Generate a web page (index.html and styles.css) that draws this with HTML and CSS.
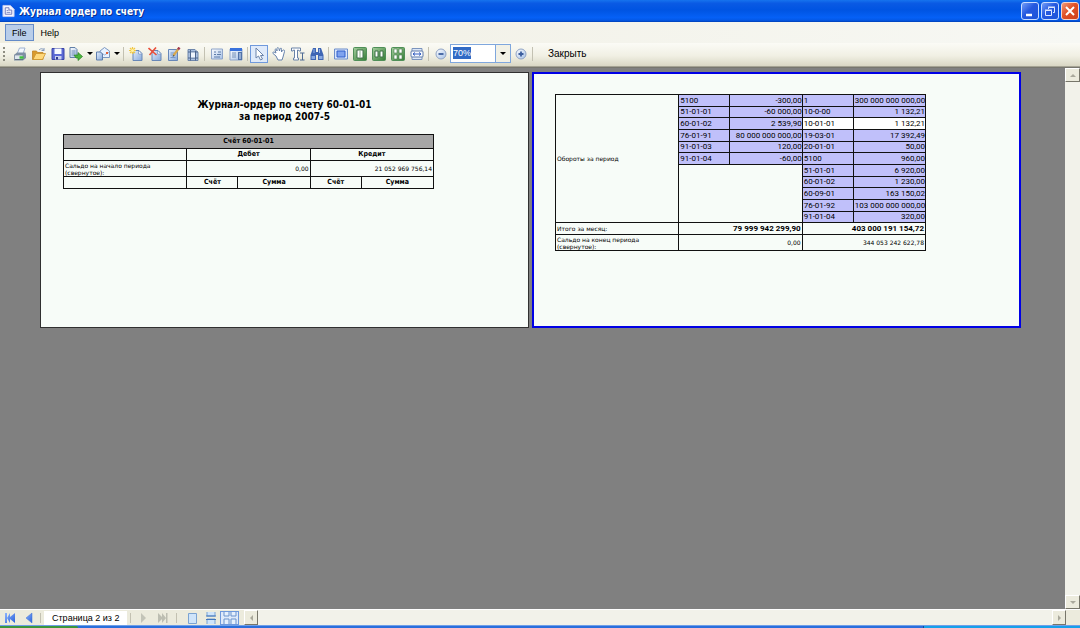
FILE: index.html
```html
<!DOCTYPE html>
<html lang="ru">
<head>
<meta charset="utf-8">
<title>Журнал ордер по счету</title>
<link rel="stylesheet" href="styles.css">
</head>
<body>
<svg class="defs" aria-hidden="true">
  <defs>
    <linearGradient id="paper" x2="1" y2="1"><stop stop-color="#fff"/><stop offset="1" stop-color="#a3bfe6"/></linearGradient>
    <linearGradient id="sheet" x2="1" y2="1"><stop stop-color="#e4eefb"/><stop offset="1" stop-color="#86a9dc"/></linearGradient>
    <linearGradient id="sky" x2="1" y2="1"><stop stop-color="#8cb4ff"/><stop offset="1" stop-color="#2c62d8"/></linearGradient>
    <linearGradient id="leaf" x2="1" y2="1"><stop stop-color="#a5cf9f"/><stop offset="1" stop-color="#347c34"/></linearGradient>
  </defs>
</svg>
<div class="window">
  <header class="titlebar">
    <svg class="app-icon" viewBox="0 0 14 14"><path d="M1 1h8l4 4v8H1z" fill="#f4f5ff" stroke="#c3c9ee"/><path d="M3.500 3.500v7h7V6h-3V3.500z" fill="none" stroke="#7078b8"/><path d="M5 6.500h2M5 8.500h4" stroke="#8088c0"/></svg>
    <h1>Журнал ордер по счету</h1>
    <button class="caption" aria-label="Свернуть"><svg viewBox="0 0 16 16"><path d="M4 12h6" stroke="#fff" stroke-width="2.500"/></svg></button>
    <button class="caption" aria-label="Восстановить"><svg viewBox="0 0 16 16" fill="none" stroke="#dce8ff"><path d="M6.500 6V4.500h6v5H11M6 4h7"/><path d="M3.500 7.500h6v5h-6zM3 7h7"/></svg></button>
    <button class="caption close" aria-label="Закрыть окно"><svg viewBox="0 0 16 16"><path d="M4 4l8 8M12 4l-8 8" stroke="#fff" stroke-width="2"/></svg></button>
  </header>
  <nav class="menu"><button class="active">File</button><button>Help</button></nav>
  <div class="toolbar">
    <span class="grip"></span>
    <button aria-label="Печать"><svg viewBox="0 0 14 14"><path d="M4 7l2.500-6H12l-2 6z" fill="#f4f8ff" stroke="#9fb2d0"/><path d="M1 8l3-2.500h8.500L13 8v3l-3 2.500H1z" fill="#7f8fa3"/><path d="M1.500 8h8.500v4.500H1.500z" fill="#dfe6ee" stroke="#7d8da0" stroke-width=".8"/><path d="M2 12.500h8" stroke="#5f7084"/><path d="M6.500 10.500h4" stroke="#3fc23f" stroke-width="2.500"/></svg></button>
    <button aria-label="Открыть"><svg viewBox="0 0 14 14"><path d="M.5 12.500V4h4l1 1.500H11v7z" fill="#d99a2c" stroke="#c08426" stroke-width=".8"/><path d="M1 12.500L4 6.500h9.500l-3 6z" fill="#ffd87a" stroke="#cc952f" stroke-width=".8"/><path d="M7 3c2-2 4-1.500 5 .5m0 0V1m0 2.500H9.500" fill="none" stroke="#8298bb"/></svg></button>
    <button aria-label="Сохранить"><svg viewBox="0 0 14 14"><path d="M1 1.500h12v11H1z" fill="#5b69d4" stroke="#3b45a8"/><path d="M3.500 1.500h7V7h-7z" fill="#f7faff"/><path d="M4 9h6.500v3.500H4z" fill="#c9d0ee"/><path d="M5 10h2v2.500H5z" fill="#2f3b8f"/></svg></button>
    <button class="split" aria-label="Экспорт"><svg viewBox="0 0 14 14"><path d="M1 .5h5l2 2v8H1z" fill="url(#paper)" stroke="#6280a8"/><path d="M2.500 4h4M2.500 6h4M2.500 8h3" stroke="#6f8cb6"/><path d="M5 8h4V5.500l4.500 4L9 13.500V11H7z" fill="#4cb63c" stroke="#278027" stroke-width=".7"/></svg><i class="arrow"></i></button>
    <button class="split" aria-label="Отправить"><svg viewBox="0 0 14 14"><path d="M4 4l4.500-3.500L13.500 4v6.500H4z" fill="#e9f2ff" stroke="#7b97c0"/><path d="M4 5l4.500 3 5-3" fill="none" stroke="#9ab0d2"/><path d="M.5 5h4l2 2v6h-6z" fill="url(#sheet)" stroke="#5f7eae"/><path d="M10 5h2v2h-2z" fill="#e0603c"/></svg><i class="arrow"></i></button>
    <span class="sep"></span>
    <button aria-label="Новая страница"><svg viewBox="0 0 14 14"><path d="M4 3.500h6l3 3v7H4z" fill="url(#sheet)" stroke="#6787b8"/><path d="M9.500 4v3h3" fill="#fff" stroke="#6787b8" stroke-width=".6"/><path d="M3.500 0v7M0 3.500h7M1 1l5 5M6 1L1 6" stroke="#f3c840" stroke-width="1.200"/><circle cx="3.500" cy="3.500" r="1.500" fill="#fff3a6"/></svg></button>
    <button aria-label="Удалить страницу"><svg viewBox="0 0 14 14"><path d="M4 3.500h6l3 3v7H4z" fill="url(#sheet)" stroke="#6787b8"/><path d="M9.500 4v3h3" fill="#fff" stroke="#6787b8" stroke-width=".6"/><path d="M.5 1l8 7M8 .5L1.500 8" stroke="#ea4f3a" stroke-width="1.600"/></svg></button>
    <button aria-label="Правка страницы"><svg viewBox="0 0 14 14"><path d="M1.500 2.500h9v11h-9z" fill="url(#sheet)" stroke="#6787b8"/><path d="M3.500 6h4M3.500 8h3M3.500 10.500h5" stroke="#7797c6"/><path d="M6.500 8.500l4.500-6" stroke="#d9a94d" stroke-width="2.200"/><path d="M11 2.500L12.500.5" stroke="#a33a4c" stroke-width="2.500"/><path d="M5.500 10l1-2 1 .8z" fill="#333"/></svg></button>
    <button aria-label="Параметры страницы"><svg viewBox="0 0 14 14"><path d="M2 2.500h7l3 3v8H2z" fill="#a9bfe0" stroke="#6f87ac"/><path d="M4.500 3v10.500M9.500 4v9.500M2 5h10M2 11h10" stroke="#4c648c"/><path d="M5 5.500h4v5H5z" fill="#eef4fd"/></svg></button>
    <span class="sep"></span>
    <button aria-label="Закладки"><svg viewBox="0 0 14 14"><path d="M1.500 2h11v10h-11z" fill="url(#paper)" stroke="#8fa5ca"/><path d="M4 5h2M8 5h3M4 7.500h2M7 7.500h4M4 10h6" stroke="#5f7da9"/></svg></button>
    <button aria-label="Параметры"><svg viewBox="0 0 14 14"><path d="M1 2h12v11H1z" fill="url(#paper)" stroke="#8fa5ca"/><path d="M1 1h12v3H1z" fill="#3972dc"/><path d="M3 6h4M3 8h4M3 10h4" stroke="#7791b8"/><path d="M9 5h4v8H9z" fill="#5072a8"/><path d="M10 7h2M10 9h2M10 11h2" stroke="#d7e5fa"/></svg></button>
    <span class="sep"></span>
    <button class="checked" aria-label="Выделение"><svg viewBox="0 0 14 14"><path d="M4 1v10l2.500-2L8.500 13l2-1-2-3.500h3z" fill="#fff" stroke="#6a83aa"/></svg></button>
    <button aria-label="Рука"><svg viewBox="0 0 14 14"><path d="M4 9L1 6.500C0 5 2 4.500 4 6L3 3c0-1.500 1.500-1 2 1L5 1.500c0-1.500 2-1 2 .5l.5 2 .5-2c.5-1.500 2-1 1.500.5L9.500 5l1-1.500C11.500 2.500 13 3 12.500 4.500L11 10l-1 3H6z" fill="#fff" stroke="#6682ab"/></svg></button>
    <button aria-label="Выделение текста"><svg viewBox="0 0 14 14"><path d="M.5 1h9v3H8L7.500 3H6.500v8h1v2h-5v-2h1V3h-1L2 4H.5z" fill="#fff" stroke="#6a83a8"/><path d="M9 6h4.500M11.500 6v7M9 13h4.500" stroke="#4f6b94"/></svg></button>
    <button aria-label="Поиск"><svg viewBox="0 0 14 14"><path d="M3 1h3v4h2V1h3l2.500 7v5H8V8H6v5H.5V8z" fill="#3f66b4"/><path d="M1.500 9H5v3H1.500zM9 9h3.500v3H9z" fill="#86a8e2"/><path d="M4 2v4M9.500 2v4" stroke="#94b4e9"/></svg></button>
    <span class="sep"></span>
    <button aria-label="Масштаб 100%"><svg viewBox="0 0 14 14"><path d="M.5 2h13v10H.5z" fill="#d8e5fc" stroke="#6d8ecb"/><path d="M3 4h8v6H3z" fill="#7fa3ef" stroke="#315fc9"/></svg></button>
    <button aria-label="Страница целиком"><svg viewBox="0 0 14 14"><rect x=".5" y=".5" width="13" height="13" rx="1" fill="url(#leaf)" stroke="#4f8f58"/><path d="M4 3h6v8H4z" fill="#fff" stroke="#3f7048"/><path d="M6 5h2M6 7h2M6 9h2" stroke="#8eb08f"/></svg></button>
    <button aria-label="Две страницы"><svg viewBox="0 0 14 14"><rect x=".5" y=".5" width="13" height="13" rx="1" fill="url(#leaf)" stroke="#4f8f58"/><path d="M3 4h3v6H3zM8 4h3v6H8z" fill="#fff" stroke="#3f7048"/></svg></button>
    <button aria-label="Несколько страниц"><svg viewBox="0 0 14 14"><rect x=".5" y=".5" width="13" height="13" rx="1" fill="url(#leaf)" stroke="#4f8f58"/><path d="M3 2h3v4H3zM8 2h3v4H8zM3 8h3v4H3zM8 8h3v4H8z" fill="#fff" stroke="#4a7e51" stroke-width=".6"/></svg></button>
    <button aria-label="По ширине"><svg viewBox="0 0 14 14"><path d="M2 1.500h10v3H2zM2 9.500h10v3H2z" fill="#dbe6f7" stroke="#7b94bd"/><rect x="1" y="4" width="12" height="6" rx="1" fill="#f6f9ff" stroke="#607ca9"/><path d="M3 7h8M5 5.500L3 7l2 1.500M9 5.500L11 7 9 8.500" fill="none" stroke="#335fc0"/></svg></button>
    <span class="sep"></span>
    <button aria-label="Уменьшить"><svg viewBox="0 0 14 14"><circle cx="7" cy="7" r="5" fill="url(#paper)" stroke="#8fa3c4"/><path d="M4.500 7h5" stroke="#3d5f9e" stroke-width="1.800"/></svg></button>
    <span class="combo"><select aria-label="Масштаб"><option>70%</option><option>100%</option></select></span>
    <button aria-label="Увеличить"><svg viewBox="0 0 14 14"><circle cx="7" cy="7" r="5" fill="url(#paper)" stroke="#8fa3c4"/><path d="M4.500 7h5M7 4.500v5" stroke="#3d5f9e" stroke-width="1.800"/></svg></button>
    <span class="sep"></span>
    <button class="text">Закрыть</button>
  </div>
  <main class="viewer">
    <div class="pages">
      <section class="page">
        <h2>Журнал-ордер по счету 60-01-01<br>за период 2007-5</h2>
        <table class="report">
          <colgroup><col class="c-name"><col class="c-acc"><col class="c-sum"><col class="c-acc"><col class="c-sum"></colgroup>
          <tbody>
          <tr class="band"><th colspan="5">Счёт 60-01-01</th></tr>
          <tr><td></td><th colspan="2">Дебет</th><th colspan="2">Кредит</th></tr>
          <tr class="tall"><td class="small">Сальдо на начало периода (свернутое):</td><td colspan="2" class="small num">0,00</td><td colspan="2" class="small num">21 052 969 756,14</td></tr>
          <tr><td></td><th>Счёт</th><th>Сумма</th><th>Счёт</th><th>Сумма</th></tr>
          </tbody>
        </table>
      </section>
      <section class="page current">
        <table class="report">
          <colgroup><col class="c-name"><col class="c-acc"><col class="c-sum"><col class="c-acc"><col class="c-sum"></colgroup>
          <tbody class="turnover">
          <tr><td rowspan="11" class="small">Обороты за период</td><td class="hl">5100</td><td class="hl num">-300,00</td><td class="hl">1</td><td class="hl num">300 000 000 000,00</td></tr>
          <tr><td class="hl">51-01-01</td><td class="hl num">-60 000,00</td><td class="hl">10-0-00</td><td class="hl num">1 132,21</td></tr>
          <tr><td class="hl">60-01-02</td><td class="hl num">2 539,90</td><td class="white">10-01-01</td><td class="white num">1 132,21</td></tr>
          <tr><td class="hl">76-01-91</td><td class="hl num">80 000 000 000,00</td><td class="hl">19-03-01</td><td class="hl num">17 392,49</td></tr>
          <tr><td class="hl">91-01-03</td><td class="hl num">120,00</td><td class="hl">20-01-01</td><td class="hl num">50,00</td></tr>
          <tr><td class="hl">91-01-04</td><td class="hl num">-60,00</td><td class="hl">5100</td><td class="hl num">960,00</td></tr>
          <tr><td colspan="2" rowspan="5"></td><td class="hl">51-01-01</td><td class="hl num">6 920,00</td></tr>
          <tr><td class="hl">60-01-02</td><td class="hl num">1 230,00</td></tr>
          <tr><td class="hl">60-09-01</td><td class="hl num">163 150,02</td></tr>
          <tr><td class="hl">76-01-92</td><td class="hl num">103 000 000 000,00</td></tr>
          <tr><td class="hl">91-01-04</td><td class="hl num">320,00</td></tr>
          </tbody>
          <tbody>
          <tr class="total"><td class="small">Итого за месяц:</td><td colspan="2" class="num">79 999 942 299,90</td><td colspan="2" class="num">403 000 191 154,72</td></tr>
          <tr class="tall"><td class="small">Сальдо на конец периода (свернутое):</td><td colspan="2" class="small num">0,00</td><td colspan="2" class="small num">344 053 242 622,78</td></tr>
          </tbody>
        </table>
      </section>
    </div>
    <div class="vscroll"><button aria-label="Вверх"><i class="tri up"></i></button><button aria-label="Вниз"><i class="tri down"></i></button></div>
  </main>
  <footer class="status">
    <button aria-label="Первая"><svg viewBox="0 0 14 14"><path d="M2 2h2v10H2zM12 2v10L7 8v4L4 7l3-5v4z" fill="url(#sky)"/></svg></button>
    <button aria-label="Предыдущая"><svg viewBox="0 0 14 14"><path d="M10 2v10L4 7z" fill="url(#sky)" stroke="#3f70d4" stroke-width=".5"/></svg></button>
    <span class="sep"></span>
    <output class="pageno">Страница 2 из 2</output>
    <span class="sep"></span>
    <button disabled aria-label="Следующая"><svg viewBox="0 0 14 14"><path d="M5 2v10l5-5z" fill="#c3c4b8"/></svg></button>
    <button disabled aria-label="Последняя"><svg viewBox="0 0 14 14"><path d="M3 2v10l4-4v4l4-5-4-5v4zM11 2h1.500v10H11z" fill="#bdbeb2"/></svg></button>
    <span class="sep wide"></span>
    <button aria-label="Одна страница"><svg viewBox="0 0 14 14"><path d="M3.500 2.500h8v10h-8z" fill="#cfe4fa" stroke="#7ba3d2"/></svg></button>
    <button aria-label="Подряд"><svg viewBox="0 0 14 14"><path d="M3 1v4h8V1M3 13V8h8v5" fill="#cfe4fa" stroke="#7ba3d2"/><path d="M2 5h10M2 8.500h10" stroke="#4377bd"/></svg></button>
    <button class="checked" aria-label="Разворот"><svg viewBox="0 0 14 14"><path d="M1 1v4h5V1M8 1v4h5V1M1 13V8h5v5M8 13V8h5v5" fill="#e5f0fd" stroke="#6a93cc"/></svg></button>
    <div class="hscroll"><button aria-label="Влево"><i class="tri left"></i></button><button aria-label="Вправо"><i class="tri right"></i></button></div>
    <span class="corner"></span>
  </footer>
  <div class="taskbar"><span class="start"></span><span class="tasks"></span><span class="tray"></span></div>
</div>
</body>
</html>
```
FILE: styles.css
```css
* { box-sizing: border-box; }
body { margin: 0; font: 10px "Liberation Sans", sans-serif; color: #000; }
button { border: 0; padding: 0; background: none; font: inherit; color: inherit; display: flex; align-items: center; justify-content: center; }
.defs { position: absolute; width: 0; height: 0; }
.window { height: 100vh; display: flex; flex-direction: column; background: #808080; overflow: hidden; }

.titlebar { height: 22px; flex: none; display: flex; align-items: center; gap: 2px; padding: 0 1px 0 2px;
  background: linear-gradient(#1673ee 0, #0a5ae4 15%, #0054e2 45%, #0560f6 80%, #0458e6 92%, #003fb5 100%); }
.titlebar h1 { flex: 1; margin: 0 0 0 2px; font: bold 10px "DejaVu Sans Condensed", "DejaVu Sans", sans-serif; color: #fff; text-shadow: 1px 1px #0a2f8c; }
.app-icon { width: 13px; height: 14px; }
.caption { width: 18px; height: 18px; border: 1px solid #c9dcff; border-radius: 3px; background: linear-gradient(135deg, #739df8, #2458df 45%, #1b54da); }
.caption svg { width: 16px; height: 16px; }
.caption.close { background: linear-gradient(135deg, #f09a7d, #df5127 45%, #cf401b); border-color: #f6d5cb; }

.menu { height: 21px; flex: none; display: flex; align-items: center; padding: 0 5px; background: linear-gradient(90deg, #f0eee1, #f7f8f4); font-size: 9px; }
.menu button { height: 17px; padding: 0 7px; border: 1px solid transparent; }
.menu button + button { padding: 0 6px; }
.menu .active { padding: 0 6px; background: #b8cde9; border-color: #648bc8; }

.toolbar { height: 24px; flex: none; display: flex; align-items: center; padding: 0 0 2px 3px; background: linear-gradient(#fbfbf6, #f1f0e4 55%, #d9d7c4); border-bottom: 1px solid #a5a394; }
.toolbar svg, .status svg { width: 14px; height: 14px; flex: none; }
.toolbar button { width: 19px; height: 19px; flex: none; }
.toolbar .split { width: 27px; gap: 4px; }
.toolbar .text { width: auto; margin-left: 13px; }
.checked { background: #dfeafa; border: 1px solid #6f99dc; }
.toolbar .checked { width: 18px; height: 18px; margin-right: 1px; }
.grip { width: 2px; height: 14px; margin-right: 5px; background: repeating-linear-gradient(#8f8e82 0 2px, transparent 2px 4px); }
.sep { width: 1px; height: 14px; margin: 0 2px; flex: none; background: #c3c1b2; }
.arrow, .combo::after { border: 3px solid transparent; border-top-color: #000; border-bottom: 0; }
.combo { position: relative; width: 61px; height: 19px; flex: none; }
.combo::after { content: ""; position: absolute; right: 5px; top: 8px; pointer-events: none; }
.combo select { appearance: none; width: 100%; height: 100%; border: 1px solid #7fa7dd; border-radius: 0; padding: 0 2px 2px; color: #fff; font: 9px "Liberation Sans", sans-serif;
  background: linear-gradient(#316ac5, #316ac5) 2px 2px / 18px 12px no-repeat, linear-gradient(90deg, #fff 44px, #7fa7dd 44px 45px, #f2f1e6 45px); }

.viewer { flex: 1; min-height: 0; display: flex; border-top: 1px solid #77766e; }
.pages { flex: 1; display: flex; align-items: flex-start; gap: 3px; padding: 4px 44px 0 40px; }
.page { flex: 1; aspect-ratio: 489 / 256; padding: 26px 22px 0; background: #f7fcf8; border: 1px solid #303030; }
.page.current { border: 2px solid #0000e6; padding: 20px 21px 0; }
.page h2 { margin: 0 auto 11px; width: 100%; text-align: center; font: bold 10px/12px "DejaVu Sans Condensed", "DejaVu Sans", sans-serif; }
.report { width: 83%; min-width: 371px; border-collapse: collapse; table-layout: fixed; font: 8px/9px Roboto, sans-serif; }
.c-name { width: 123px; } .c-acc { width: 51px; } .c-sum { width: 72px; }
.report td, .report th { height: 12px; padding: 0 1px; border: 1px solid #111; white-space: nowrap; }
.turnover td { padding: 0 0 1px 1px; vertical-align: middle; }
.report th { font: bold 7px/9px "DejaVu Sans Condensed", "DejaVu Sans", sans-serif; }
.report .band th { height: 14px; background: #a6a6a6; }
.report .small { font: 6px/7px "DejaVu Sans", sans-serif; white-space: normal; }
.report .tall td { height: 16px; }
.report .num { text-align: right; }
.turnover tr:nth-child(3n+2) td { height: 11px; }
.report .hl { background: #c0c0fa; } .report .white { background: #fff; }
.total .num { font-weight: bold; }

.vscroll { width: 15px; display: flex; flex-direction: column; justify-content: space-between; background: #f2f2ea; }
.vscroll button, .hscroll button { width: 15px; height: 14px; background: #ecebdd; border: 1px solid; border-color: #fff #77766a #77766a #fff; }
.tri { border: 3px solid transparent; }
.up { border-bottom-color: #aaa99c; border-top: 0; } .down { border-top-color: #aaa99c; border-bottom: 0; }
.left { border-right-color: #aaa99c; border-left: 0; } .right { border-left-color: #aaa99c; border-right: 0; }
.status { height: 16px; flex: none; display: flex; align-items: center; background: #ecebdd; border-top: 1px solid #fff; }
.status button { width: 19px; height: 14px; flex: none; }
.status .sep { height: 10px; }
.status .pageno { background: #fff; padding: 0 8px; margin: 0 1px; font-size: 9px; line-height: 14px; }
.status .wide { margin: 0 5px; }
.hscroll { flex: 1; display: flex; justify-content: space-between; margin-left: 5px; background: #f2f2ea; }
.status .hscroll button { width: 14px; height: 15px; }
.corner { width: 14px; }
.taskbar { height: 3px; flex: none; display: flex; background: #2a6fdc; border-top: 1px solid #6f9fe8; }
.start { width: 78px; background: #3c963c; border-radius: 0 3px 0 0; }
.tasks { flex: 1; } .tray { width: 157px; background: #16a0ea; border-left: 1px solid #104a9c; }
```
